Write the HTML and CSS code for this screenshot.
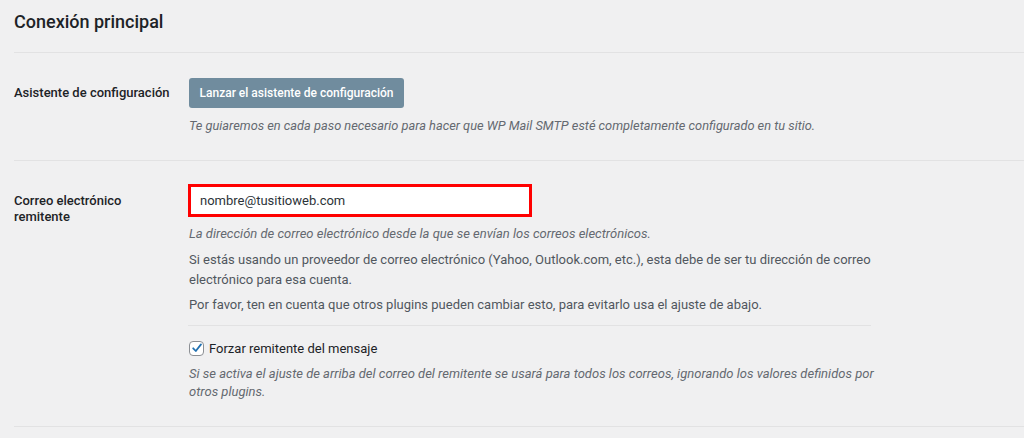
FILE: index.html
```html
<!DOCTYPE html>
<html lang="es">
<head>
<meta charset="utf-8">
<link rel="stylesheet" href="styles.css">
</head>
<body>
<div class="page">
  <h2 class="title">Conexión principal</h2>

  <div class="row row-first">
    <div class="label">Asistente de configuración</div>
    <div class="field">
      <button class="btn">Lanzar el asistente de configuración</button>
      <p class="desc desc-btn">Te guiaremos en cada paso necesario para hacer que WP Mail SMTP esté completamente configurado en tu sitio.</p>
    </div>
  </div>

  <div class="row row-second">
    <div class="label">Correo electrónico<br>remitente</div>
    <div class="field">
      <div class="input">nombre@tusitioweb.com</div>
      <p class="desc d1">La dirección de correo electrónico desde la que se envían los correos electrónicos.</p>
      <p class="note d2">Si estás usando un proveedor de correo electrónico (Yahoo, Outlook.com, etc.), esta debe de ser tu dirección de correo electrónico para esa cuenta.</p>
      <p class="note d3">Por favor, ten en cuenta que otros plugins pueden cambiar esto, para evitarlo usa el ajuste de abajo.</p>
      <hr class="inner">
      <label class="check">
        <span class="box"><svg width="12" height="12" viewBox="0 0 12 12"><path d="M2.2 6.3 L4.8 9 L10 2.4" fill="none" stroke="#2271b1" stroke-width="1.8" stroke-linecap="round" stroke-linejoin="round"/></svg></span>
        <span class="check-text">Forzar remitente del mensaje</span>
      </label>
      <p class="desc d4">Si se activa el ajuste de arriba del correo del remitente se usará para todos los correos, ignorando los valores definidos por otros plugins.</p>
    </div>
  </div>
</div>
</body>
</html>
```

FILE: styles.css
```css
html, body {
  margin: 0;
  padding: 0;
  background: #f0f0f1;
}
body {
  font-family: Roboto, "Liberation Sans", sans-serif;
  color: #1d2327;
  font-size: 13px;
}
.page {
  padding-left: 14px;
}
.title {
  margin: 0;
  padding: 10px 0 18px;
  font-size: 18px;
  line-height: 24px;
  font-weight: 500;
  color: #1d2327;
  border-bottom: 1px solid #e2e2e3;
}
.row {
  display: grid;
  grid-template-columns: 174px 1fr;
  border-bottom: 1px solid #e2e2e3;
}
.label {
  padding-top: 32px;
  font-size: 13px;
  line-height: 16px;
  font-weight: 500;
  color: #1d2327;
}
.row-first .field {
  padding: 25px 0 25px 1px;
}
.row-second .field {
  padding: 23px 0 25px 0;
}
.btn {
  display: block;
  width: 215px;
  height: 30px;
  padding: 0;
  border: 0;
  border-radius: 3px;
  background: #708c9e;
  color: #fff;
  font-family: inherit;
  font-size: 12px;
  font-weight: 500;
}
p {
  margin: 0;
}
.desc {
  font-style: italic;
  color: #646970;
  font-size: 13px;
}
.desc-btn {
  margin-top: 9px;
  line-height: 18px;
  font-size: 12.8px;
}
.input {
  box-sizing: border-box;
  width: 344px;
  height: 33px;
  border: 3px solid #ff0000;
  background: #fff;
  padding-left: 9px;
  line-height: 27px;
  font-size: 13px;
  color: #2c3338;
}
.note {
  color: #50575e;
  font-size: 13px;
  line-height: 20px;
  padding-left: 1px;
}
.d1 {
  margin-top: 7px;
  line-height: 20px;
  padding-left: 1px;
}
.d2 {
  margin-top: 6px;
  max-width: 690px;
}
.d3 {
  margin-top: 5px;
}
.inner {
  margin: 10px 0 0;
  width: 683px;
  border: 0;
  border-top: 1px solid #e2e2e3;
  height: 0;
}
.check {
  display: flex;
  align-items: center;
  gap: 5px;
  margin-top: 12px;
  height: 20px;
  padding-left: 1px;
}
.box {
  box-sizing: border-box;
  width: 15px;
  height: 15px;
  border: 1px solid #8c8f94;
  border-radius: 4px;
  background: #fff;
  display: flex;
  align-items: center;
  justify-content: center;
}
.check-text {
  color: #1d2327;
  font-size: 13px;
}
.d4 {
  margin-top: 7px;
  line-height: 18px;
  max-width: 690px;
  padding-left: 1px;
}
```
